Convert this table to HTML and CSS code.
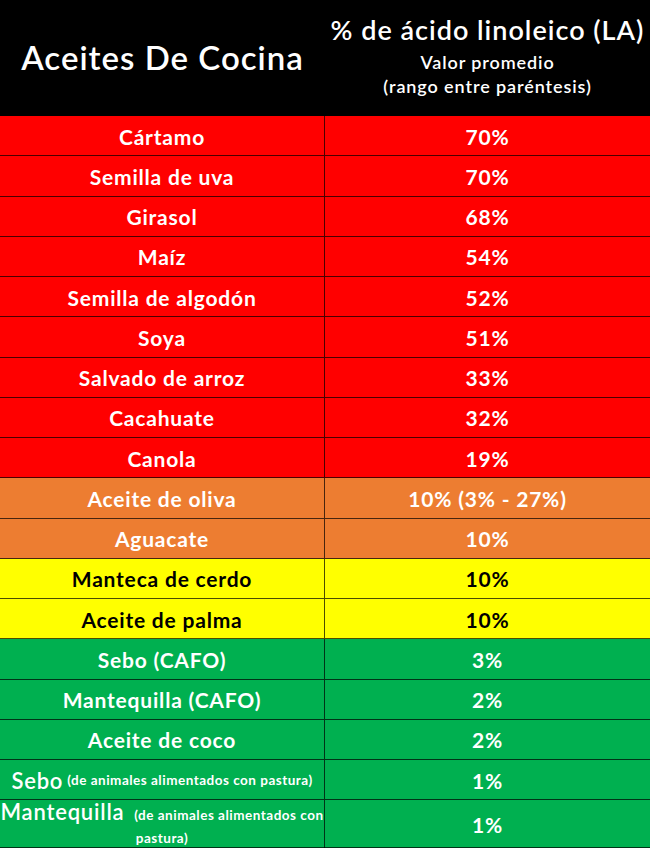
FILE: index.html
```html
<!DOCTYPE html>
<html lang="es">
<head>
<meta charset="utf-8">
<title>Aceites De Cocina</title>
<link rel="stylesheet" href="styles.css">
</head>
<body>
<div class="chart">
  <div class="head">
    <div class="hcell h-left">Aceites De Cocina</div>
    <div class="hcell h-right">
      <div class="h-title">% de ácido linoleico (LA)</div>
      <div class="h-sub">Valor promedio<br>(rango entre paréntesis)</div>
    </div>
  </div>
  <div class="row red"><div class="cell">Cártamo</div><div class="cell">70%</div></div>
  <div class="row red"><div class="cell">Semilla de uva</div><div class="cell">70%</div></div>
  <div class="row red"><div class="cell">Girasol</div><div class="cell">68%</div></div>
  <div class="row red"><div class="cell">Maíz</div><div class="cell">54%</div></div>
  <div class="row red"><div class="cell">Semilla de algodón</div><div class="cell">52%</div></div>
  <div class="row red"><div class="cell">Soya</div><div class="cell">51%</div></div>
  <div class="row red"><div class="cell">Salvado de arroz</div><div class="cell">33%</div></div>
  <div class="row red"><div class="cell">Cacahuate</div><div class="cell">32%</div></div>
  <div class="row red"><div class="cell">Canola</div><div class="cell">19%</div></div>
  <div class="row orange"><div class="cell">Aceite de oliva</div><div class="cell">10% (3% - 27%)</div></div>
  <div class="row orange"><div class="cell">Aguacate</div><div class="cell">10%</div></div>
  <div class="row yellow"><div class="cell">Manteca de cerdo</div><div class="cell">10%</div></div>
  <div class="row yellow"><div class="cell">Aceite de palma</div><div class="cell">10%</div></div>
  <div class="row green"><div class="cell">Sebo (CAFO)</div><div class="cell">3%</div></div>
  <div class="row green"><div class="cell">Mantequilla (CAFO)</div><div class="cell">2%</div></div>
  <div class="row green"><div class="cell">Aceite de coco</div><div class="cell">2%</div></div>
  <div class="row green short"><div class="cell"><span class="big">Sebo</span> <span class="note">(de animales alimentados con pastura)</span></div><div class="cell">1%</div></div>
  <div class="row green tall"><div class="cell"><span class="big">Mantequilla</span> <span class="note">(de animales alimentados con pastura)</span></div><div class="cell">1%</div></div>
</div>
</body>
</html>
```
FILE: styles.css
```css
html, body {
  margin: 0;
  padding: 0;
  background: #000;
}
.chart {
  width: 650px;
  font-family: "Lato", "Open Sans", sans-serif;
  color: #fff;
}
.head {
  display: grid;
  grid-template-columns: 325px 325px;
  height: 116px;
  background: #000;
}
.hcell {
  display: flex;
  flex-direction: column;
  align-items: center;
  justify-content: center;
  text-align: center;
}
.h-left {
  font-size: 33px;
  font-weight: 600;
  letter-spacing: 1px;
  padding-bottom: 2px;
}
.h-right {
  justify-content: flex-start;
  padding-top: 11px;
}
.h-title {
  font-size: 27px;
  font-weight: 600;
  letter-spacing: 1px;
  line-height: 38px;
}
.h-sub {
  font-size: 18px;
  font-weight: 600;
  letter-spacing: 0.9px;
  line-height: 24px;
  margin-top: 1px;
}
.row {
  display: grid;
  grid-template-columns: 325px 325px;
  height: 40.25px;
  box-sizing: border-box;
  border-bottom: 1px solid rgba(0, 0, 0, 0.7);
}
.cell {
  display: flex;
  align-items: center;
  justify-content: center;
  text-align: center;
  font-size: 21px;
  font-weight: 700;
  letter-spacing: 0.8px;
  padding-top: 1px;
}
.cell:first-child {
  border-right: 1px solid rgba(0, 0, 0, 0.7);
}
.red { background: #ff0000; }
.orange { background: #ed7d31; }
.yellow { background: #ffff00; color: #000; }
.green { background: #00b050; }
.short { height: 40px; }
.tall { height: 48px; }
.big {
  font-size: 22px;
  font-weight: 600;
}
.note {
  font-size: 13.5px;
  font-weight: 700;
  letter-spacing: 0.5px;
  margin-left: 4px;
}
.tall .cell:first-child {
  display: block;
  padding: 2px 0 0;
  line-height: 19px;
}
```
